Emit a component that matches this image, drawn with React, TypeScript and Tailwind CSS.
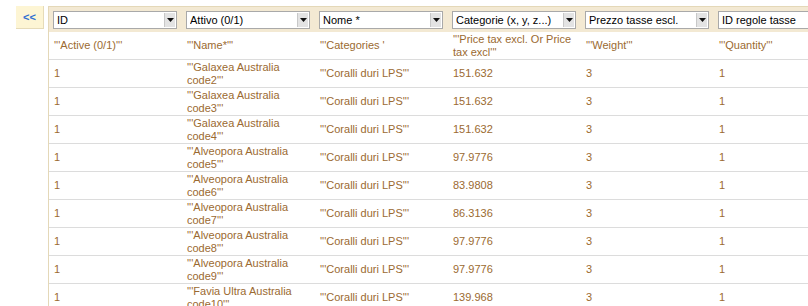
import React from "react";

const filters = [
  "ID",
  "Attivo (0/1)",
  "Nome *",
  "Categorie (x, y, z...)",
  "Prezzo tasse escl.",
  "ID regole tasse",
];

const labels = [
  "'''Active (0/1)'''",
  "'''Name*'''",
  "'''Categories '",
  "'''Price tax excl. Or Price tax excl'''",
  "'''Weight'''",
  "'''Quantity'''",
];

const rows: [string, string][] = [
  ["Galaxea Australia code2", "151.632"],
  ["Galaxea Australia code3", "151.632"],
  ["Galaxea Australia code4", "151.632"],
  ["Alveopora Australia code5", "97.9776"],
  ["Alveopora Australia code6", "83.9808"],
  ["Alveopora Australia code7", "86.3136"],
  ["Alveopora Australia code8", "97.9776"],
  ["Alveopora Australia code9", "97.9776"],
  ["Favia Ultra Australia code10", "139.968"],
];

function FakeSelect({ label }: { label: string }) {
  return (
    <div className="flex h-[18px] w-[124px] items-center border border-[#a9a9a9] bg-white pl-[3px] pr-[1px]">
      <div className="min-w-0 flex-1 overflow-hidden whitespace-nowrap text-[11px] leading-[14px] text-black">
        {label}
      </div>
      <div className="flex h-[14px] w-[11px] shrink-0 items-center justify-center border-l border-[#c8c8c8] bg-[#e3e3e3]">
        <svg width="7" height="4" viewBox="0 0 7 4">
          <polygon points="0,0 7,0 3.5,4" fill="#111" />
        </svg>
      </div>
    </div>
  );
}

function Cell({ children }: { children: React.ReactNode }) {
  return (
    <div className="flex h-full w-[133px] shrink-0 items-center pl-[5px] text-[11px] leading-[13px] text-[#9b6a31]">
      <span className="block w-full">{children}</span>
    </div>
  );
}

function Row({ cells }: { cells: string[] }) {
  return (
    <div className="flex h-[28px] border-b border-[#dcdcdc]">
      {cells.map((c, i) => (
        <Cell key={i}>{c}</Cell>
      ))}
    </div>
  );
}

export default function App() {
  return (
    <div
      className="flex h-[306px] w-[808px] items-start overflow-hidden bg-white"
      style={{ fontFamily: '"Liberation Sans", Arial, sans-serif' }}
    >
      <div className="ml-[16px] mt-[6px] flex h-[23px] w-[28px] shrink-0 items-center justify-center border-b border-r border-[#e6dbb8] bg-[#fdf5d4] text-[11px] font-bold text-[#2f6fd2]">
        &lt;&lt;
      </div>
      <div className="ml-[4px] mt-[6px] shrink-0 border-l border-t border-[#e4d8b8]">
        <div className="flex h-[25px] items-center bg-[#f3e9d3]">
          {filters.map((f) => (
            <div key={f} className="w-[133px] shrink-0 pl-[4px]">
              <FakeSelect label={f} />
            </div>
          ))}
        </div>
        <div className="flex h-[28px] border-b border-[#dcdcdc]">
          {labels.map((l) => (
            <Cell key={l}>{l}</Cell>
          ))}
        </div>
        {rows.map(([name, price]) => (
          <Row
            key={name}
            cells={["1", `'''${name}'''`, "'''Coralli duri LPS'''", price, "3", "1"]}
          />
        ))}
      </div>
    </div>
  );
}
